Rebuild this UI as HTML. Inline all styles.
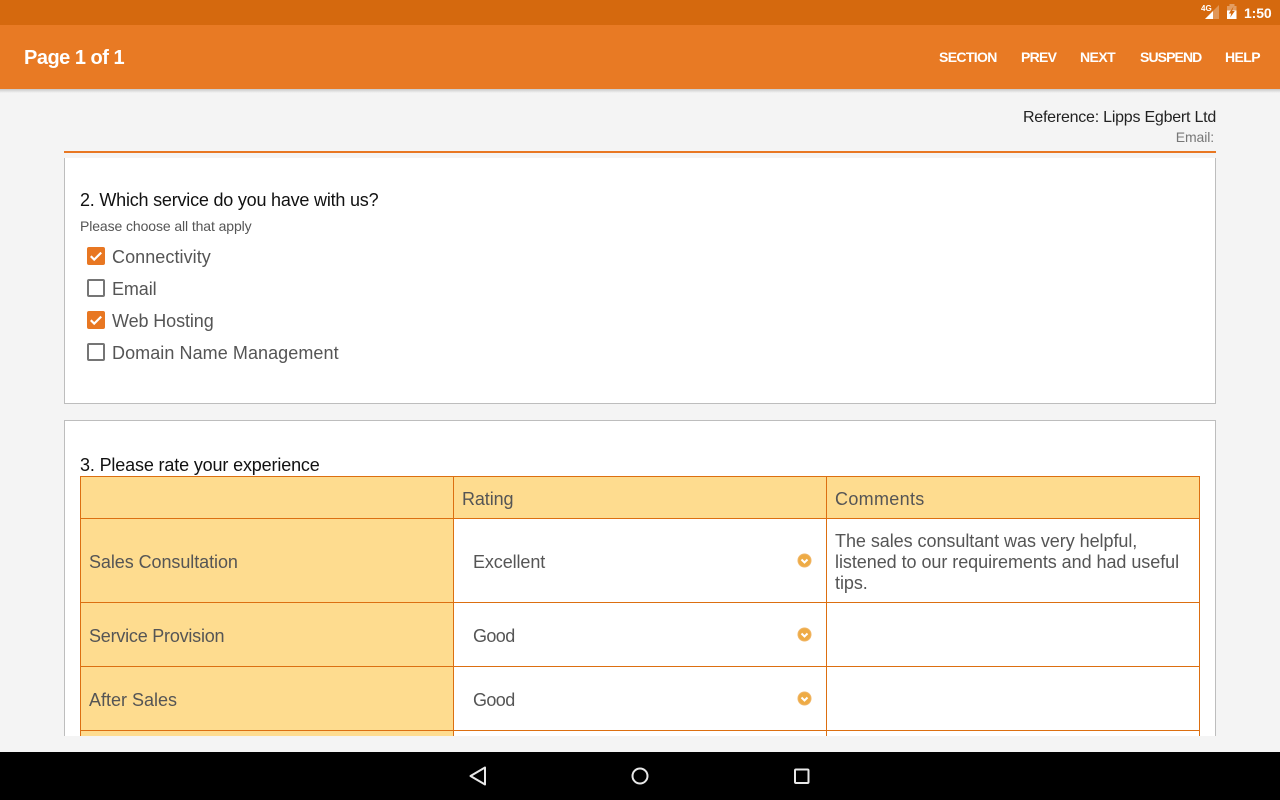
<!DOCTYPE html>
<html><head><meta charset="utf-8">
<style>
html,body{margin:0;padding:0;width:1280px;height:800px;overflow:hidden;background:#f4f4f4;font-family:"Liberation Sans",sans-serif}
div{position:absolute;box-sizing:border-box}
.t{white-space:nowrap;line-height:20px}
.act{top:47px;color:#fff;font-size:14px;font-weight:bold}
.g{color:#555;font-size:18px;letter-spacing:-.1px}
.cb{left:87px;width:18px;height:18px;border-radius:2px}
.on{background:#e87722}
.off{border:2px solid #757575}
.cell{border:1px solid #dc6f11}
.h{background:#fedc8f}
.w{background:#fff}
</style></head><body>
<div style="left:0;top:0;width:1280px;height:25px;background:#d5690e"></div>
<svg style="position:absolute;left:1200px;top:4px" width="24" height="18" viewBox="0 0 24 18">
<path d="M5 15 L19 1 V15Z" fill="#fff" opacity=".3"/>
<path d="M5 15 L13 7 V15Z" fill="#fff"/>
</svg>
<div class="t" style="left:1201px;top:4px;color:#fff;font-size:8px;font-weight:bold;line-height:10px">4G</div>
<svg style="position:absolute;left:1226px;top:3px" width="12" height="17" viewBox="0 0 12 17">
<path d="M1 3 H3.5 V1 H8.5 V3 H10.5 V16 H1Z" fill="#fff" opacity=".35"/>
<path d="M1 7.5 H10.5 V16 H1Z" fill="#fff"/>
<path d="M7.5 3.5 L2.8 10.5 H5.2 L4.2 14.5 L8.8 8 H6.2Z" fill="#d5690e"/>
</svg>
<div class="t" style="left:1244px;top:3px;color:#fff;font-size:14px;font-weight:bold;letter-spacing:-.1px">1:50</div>

<div style="left:0;top:25px;width:1280px;height:64px;background:#e87a24"></div>
<div style="left:0;top:89px;width:1280px;height:4px;background:linear-gradient(#c9c9c9,#f4f4f4)"></div>
<div class="t" style="left:24px;top:48px;color:#fff;font-size:20px;font-weight:bold;letter-spacing:-.5px">Page 1 of 1</div>
<div class="t act" style="left:939px;letter-spacing:-.65px">SECTION</div>
<div class="t act" style="left:1021px;letter-spacing:-.7px">PREV</div>
<div class="t act" style="left:1080px;letter-spacing:-.55px">NEXT</div>
<div class="t act" style="left:1140px;letter-spacing:-.9px">SUSPEND</div>
<div class="t act" style="left:1225px;letter-spacing:-.6px">HELP</div>

<div class="t" style="right:64px;top:108px;color:#222;font-size:16px;letter-spacing:-.23px">Reference: Lipps Egbert Ltd</div>
<div class="t" style="right:66px;top:127px;color:#777;font-size:14px;letter-spacing:-.1px">Email:</div>
<div style="left:64px;top:151px;width:1152px;height:2px;background:#e87722"></div>

<div style="left:64px;top:158px;width:1152px;height:246px;background:#fff;border:1px solid #bdbdbd;border-top:0"></div>
<div class="t" style="left:80px;top:190px;color:#111;font-size:18px;letter-spacing:-.21px">2. Which service do you have with us?</div>
<div class="t" style="left:80px;top:216px;color:#555;font-size:14px;letter-spacing:-.1px">Please choose all that apply</div>

<div class="cb on" style="top:247px"><svg width="18" height="18" viewBox="0 0 18 18"><path d="M3.8 9.2 L7.2 12.6 L14.2 5.6" fill="none" stroke="#fff" stroke-width="2.2"/></svg></div>
<div class="t g" style="left:112px;top:247px;letter-spacing:.07px">Connectivity</div>
<div class="cb off" style="top:279px"></div>
<div class="t g" style="left:112px;top:279px">Email</div>
<div class="cb on" style="top:311px"><svg width="18" height="18" viewBox="0 0 18 18"><path d="M3.8 9.2 L7.2 12.6 L14.2 5.6" fill="none" stroke="#fff" stroke-width="2.2"/></svg></div>
<div class="t g" style="left:112px;top:311px">Web Hosting</div>
<div class="cb off" style="top:343px"></div>
<div class="t g" style="left:112px;top:343px;letter-spacing:.07px">Domain Name Management</div>

<div style="left:64px;top:420px;width:1152px;height:316px;background:#fff;border:1px solid #bdbdbd;border-bottom:0"></div>
<div class="t" style="left:80px;top:455px;color:#111;font-size:18px;letter-spacing:-.15px">3. Please rate your experience</div>

<div class="cell h" style="left:80px;top:476px;width:374px;height:43px"></div>
<div class="cell h" style="left:453px;top:476px;width:374px;height:43px"></div>
<div class="cell h" style="left:826px;top:476px;width:374px;height:43px"></div>
<div class="cell h" style="left:80px;top:518px;width:374px;height:85px"></div>
<div class="cell w" style="left:453px;top:518px;width:374px;height:85px"></div>
<div class="cell w" style="left:826px;top:518px;width:374px;height:85px"></div>
<div class="cell h" style="left:80px;top:602px;width:374px;height:65px"></div>
<div class="cell w" style="left:453px;top:602px;width:374px;height:65px"></div>
<div class="cell w" style="left:826px;top:602px;width:374px;height:65px"></div>
<div class="cell h" style="left:80px;top:666px;width:374px;height:65px"></div>
<div class="cell w" style="left:453px;top:666px;width:374px;height:65px"></div>
<div class="cell w" style="left:826px;top:666px;width:374px;height:65px"></div>
<div class="cell h" style="left:80px;top:730px;width:374px;height:6px;border-bottom:0"></div>
<div class="cell w" style="left:453px;top:730px;width:374px;height:6px;border-bottom:0"></div>
<div class="cell w" style="left:826px;top:730px;width:374px;height:6px;border-bottom:0"></div>

<div class="t g" style="left:462px;top:489px">Rating</div>
<div class="t g" style="left:835px;top:489px;letter-spacing:.32px">Comments</div>
<div class="t g" style="left:89px;top:552px;letter-spacing:-.07px">Sales Consultation</div>
<div class="t g" style="left:473px;top:552px">Excellent</div>
<div class="t g" style="left:835px;top:531px;line-height:21px;letter-spacing:-.05px">The sales consultant was very helpful,<br>listened to our requirements and had useful<br>tips.</div>
<div class="t g" style="left:89px;top:626px;letter-spacing:-.22px">Service Provision</div>
<div class="t g" style="left:473px;top:626px;letter-spacing:-.6px">Good</div>
<div class="t g" style="left:89px;top:690px;letter-spacing:0">After Sales</div>
<div class="t g" style="left:473px;top:690px;letter-spacing:-.6px">Good</div>

<svg style="position:absolute;left:797px;top:553px" width="15" height="15" viewBox="0 0 15 15"><circle cx="7.5" cy="7.5" r="6.5" fill="#eeab45" stroke="#f0b565"/><path d="M4.5 6.5 L7.5 9.5 L10.5 6.5" fill="none" stroke="#fff" stroke-width="2"/></svg>
<svg style="position:absolute;left:797px;top:627px" width="15" height="15" viewBox="0 0 15 15"><circle cx="7.5" cy="7.5" r="6.5" fill="#eeab45" stroke="#f0b565"/><path d="M4.5 6.5 L7.5 9.5 L10.5 6.5" fill="none" stroke="#fff" stroke-width="2"/></svg>
<svg style="position:absolute;left:797px;top:691px" width="15" height="15" viewBox="0 0 15 15"><circle cx="7.5" cy="7.5" r="6.5" fill="#eeab45" stroke="#f0b565"/><path d="M4.5 6.5 L7.5 9.5 L10.5 6.5" fill="none" stroke="#fff" stroke-width="2"/></svg>

<div style="left:0;top:752px;width:1280px;height:48px;background:#000"></div>
<svg style="position:absolute;left:460px;top:755px" width="360" height="45" viewBox="0 0 360 45">
<path d="M25 12.5 L10.5 21 L25 29.5Z" fill="none" stroke="#e8e8e8" stroke-width="2" stroke-linejoin="round"/>
<circle cx="180" cy="21" r="7.5" fill="none" stroke="#e8e8e8" stroke-width="2"/>
<rect x="335" y="14.5" width="13.5" height="13.5" rx="1" fill="none" stroke="#e8e8e8" stroke-width="2"/>
</svg>
</body></html>
